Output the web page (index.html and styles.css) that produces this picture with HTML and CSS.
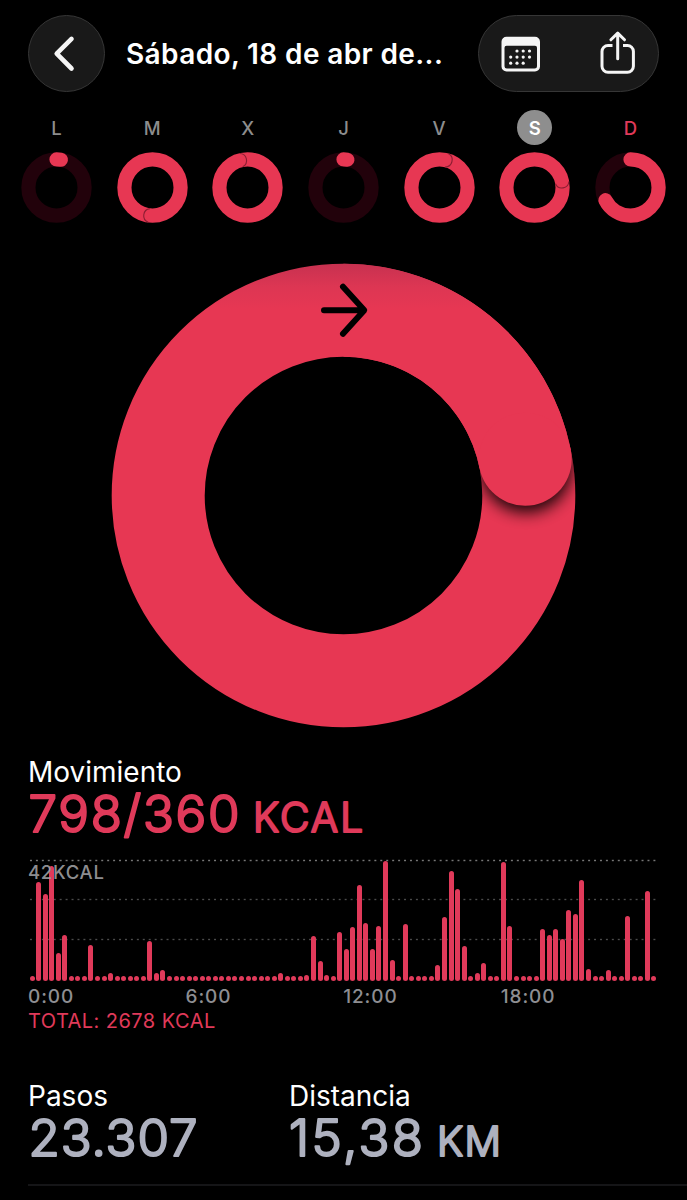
FILE: index.html
```html
<!DOCTYPE html>
<html lang="es">
<head>
<meta charset="utf-8">
<title>Movimiento</title>
<link rel="stylesheet" href="styles.css">
</head>
<body>
<main class="screen">
  <header class="topbar">
    <button class="glass back" aria-label="Atrás">
      <svg width="75" height="75" viewBox="0 0 75 75"><path d="M42.500 22.900 27.700 37.700l14.800 14.800" class="line back-line"/></svg>
    </button>
    <h1 class="title">Sábado, 18 de abr de...</h1>
    <div class="glass actions">
      <svg width="179" height="75" viewBox="1.500 .5 179 75">
        <path fill-rule="evenodd" fill="#f5f5f5" d="M29 21.2h28.500a5 5 0 0 1 5 5V51a5 5 0 0 1-5 5H29a5 5 0 0 1-5-5V26.200a5 5 0 0 1 5-5ZM29 30.200a2 2 0 0 0-2 2V50.700a2.300 2.300 0 0 0 2.300 2.300H57.200a2.300 2.300 0 0 0 2.300-2.300V32.200a2 2 0 0 0-2-2Z"/>
        <g fill="#f5f5f5">
          <circle cx="39.500" cy="35.500" r="1.600"/><circle cx="45.700" cy="35.500" r="1.600"/><circle cx="52" cy="35.500" r="1.600"/>
          <circle cx="33.200" cy="41.600" r="1.600"/><circle cx="39.500" cy="41.600" r="1.600"/><circle cx="45.700" cy="41.600" r="1.600"/><circle cx="52" cy="41.600" r="1.600"/>
          <circle cx="33.200" cy="47.700" r="1.600"/><circle cx="39.500" cy="47.700" r="1.600"/><circle cx="45.700" cy="47.700" r="1.600"/>
        </g>
        <path class="line share-line" d="M135 30H130.500a6 6 0 0 0-6 6V50.800a6 6 0 0 0 6 6h19.400a6 6 0 0 0 6-6V36a6 6 0 0 0-6-6H145.500"/>
        <path class="line share-line" d="M140.200 43.200V18M133.400 24.300 140.200 17.600l6.800 6.700"/>
      </svg>
    </div>
  </header>

  <nav class="week" id="week"></nav>

  <svg class="ring" width="465" height="464" viewBox="-232.500 -231.500 465 464">
    <defs>
      <linearGradient id="fade" gradientUnits="userSpaceOnUse" x1="0" y1="-232" x2="0" y2="-185">
        <stop offset="0" stop-color="#c73150"/><stop offset=".5" stop-color="#dd3653"/><stop offset="1" stop-color="#e73753"/>
      </linearGradient>
      <clipPath id="band"><path clip-rule="evenodd" d="M0-231.800a231.800 231.800 0 1 1 0 463.600a231.800 231.800 0 1 1 0-463.600ZM0-138.800a138.800 138.800 0 1 0 0 277.600a138.800 138.800 0 1 0 0-277.600Z"/></clipPath>
      <filter id="soft" x="-50%" y="-50%" width="200%" height="200%"><feGaussianBlur stdDeviation="8"/></filter>
    </defs>
    <circle r="185.300" fill="none" stroke="url(#fade)" stroke-width="93"/>
    <g clip-path="url(#band)">
      <circle cx="182.500" cy="-29" r="46" filter="url(#soft)" opacity=".9"/>
    </g>
    <path d="M0-185.300A185.300 185.300 0 0 1 181.700-36.300" fill="none" stroke="url(#fade)" stroke-width="93"/>
    <circle cx="181.700" cy="-36.300" r="46.500" fill="#e73753"/>
    <path d="M-19.500-185.300H20.500M-.5-208.800 20.800-185.300-.5-161.800" class="arrow"/>
  </svg>

  <section class="move">
    <h2 class="label">Movimiento</h2>
    <svg class="value red" width="400" height="50"><text x=".5" y="42.800" font-size="51" textLength="211">798/360</text><text x="225" y="42.800" font-size="40.500" textLength="110">KCAL</text></svg>
    <div class="chart">
      <div class="bars" id="bars"></div>
      <span class="peak">42KCAL</span>
    </div>
    <div class="hours"><span>0:00</span><span>6:00</span><span>12:00</span><span>18:00</span></div>
    <p class="total">TOTAL: 2678 KCAL</p>
  </section>

  <section class="stats">
    <div>
      <h2 class="label">Pasos</h2>
      <svg class="value gray" width="220" height="50"><text x=".5" y="42.800" font-size="51" textLength="169">23.307</text></svg>
    </div>
    <div>
      <h2 class="label">Distancia</h2>
      <svg class="value gray" width="260" height="50"><text x="0" y="42.800" font-size="51" textLength="134">15,38</text><text x="148" y="42.800" font-size="40.500" textLength="64">KM</text></svg>
    </div>
  </section>
</main>
<script src="app.js"></script>
</body>
</html>
```
FILE: styles.css
```css
* { box-sizing: border-box; }
body { margin: 0; background: #000; color: #fff; font-family: Inter, "Liberation Sans", sans-serif; }
h1, h2, p { margin: 0; font-weight: 400; }
svg { display: block; }
.screen { width: 687px; height: 1200px; overflow: hidden; display: flex; flex-direction: column; }
.topbar { display: flex; align-items: center; height: 92px; padding: 14px 28px 0; flex: none; }
.glass { height: 77px; padding: 0; border: 1px solid #363636; background: #191919; border-radius: 39px; overflow: hidden; flex: none; }
.back { width: 77px; }
.actions { width: 181px; margin-left: auto; }
.line { fill: none; stroke: #f5f5f5; stroke-linejoin: round; }
.back-line { stroke-width: 4.600; stroke-linecap: round; }
.share-line { stroke-width: 3; }
.share-line:last-child { stroke-linecap: round; }
.title { margin-left: 21px; padding-top: 2px; font-size: 28px; font-weight: 600; letter-spacing: 0.380px; white-space: nowrap; }

.week { display: flex; justify-content: space-between; padding: 18px 21px 0; height: 135px; flex: none; }
.day { width: 71px; display: flex; flex-direction: column; align-items: center; gap: 7px; }
.letter { width: 35px; height: 35px; border-radius: 50%; display: grid; place-items: center; font-size: 18.500px; font-weight: 500; color: #8d8d8d; }
.selected .letter { background: #8e8e8e; color: #fff; font-weight: 600; }
.sunday .letter { color: #e03a5a; }
.track { fill: none; stroke: #22020b; stroke-width: 14.2; }
.arc { fill: none; stroke: #e73753; stroke-width: 14.2; stroke-linecap: round; }
.tip { fill: none; stroke: #8b1e32; stroke-width: 1.1; }

.ring { margin: 37px 0 0 111px; flex: none; overflow: visible; }
.arrow { fill: none; stroke: #000; stroke-width: 6; stroke-linecap: round; stroke-linejoin: round; }

.move { padding: 27px 28px 0; height: 324px; flex: none; }
.label { font-size: 28px; line-height: 34px; letter-spacing: 0; }
.value { overflow: visible; font-weight: 300; }
.value text { stroke-width: 2.200; stroke-linejoin: round; }
.red { fill: #e03a5a; stroke: #e03a5a; }
.gray { fill: #aeb1bf; stroke: #aeb1bf; }
.chart { position: relative; height: 122px; margin-top: 20px;
  background:
    radial-gradient(circle, #777 0.8px, transparent 1.200px) 0 0 / 5.950px 3px repeat-x,
    radial-gradient(circle, #4c4c4c 0.7px, transparent 1.200px) 0 39px / 5.950px 3px repeat-x,
    radial-gradient(circle, #4c4c4c 0.7px, transparent 1.200px) 0 79px / 5.950px 3px repeat-x; }
.bars { display: flex; align-items: flex-end; justify-content: space-between; height: 122px; padding-left: 1.500px; width: 629.500px; }
.bar { width: 5px; border-radius: 2.500px; background: #e03a5a; flex: none; }
.peak { position: absolute; left: 0; top: 1px; font-size: 18.500px; line-height: 24px; font-weight: 500; letter-spacing: 0.700px; color: rgba(160, 160, 164, .9); }
.hours { display: grid; grid-template-columns: repeat(4, 157.600px); margin-top: 4px; font-size: 19px; line-height: 24px; font-weight: 500; letter-spacing: 0.900px; color: #8e8e92; }
.total { font-size: 20px; line-height: 24px; letter-spacing: 0.450px; color: #e03a5a; }
.stats { display: grid; grid-template-columns: 261px 1fr; margin-left: 28px; padding-top: 27px; height: 134px; border-bottom: 2px solid #151517; flex: none; }
```
FILE: app.js
```js
// Weekly rings: letter, progress in degrees, whether a full lap is complete
const days = [
  ["L", 9, false], ["M", 187, true], ["X", 347, true], ["J", 8, false],
  ["V", 15, true], ["S", 80, true, "selected"], ["D", 243, false, "sunday"]
];
document.getElementById("week").innerHTML = days.map(([letter, deg, lap, cls = ""]) => {
  const ring = lap
    ? `<circle cx="35.500" cy="35.500" r="28.100" class="arc"/><path class="tip" transform="rotate(${deg} 35.500 35.500)" d="M35.500 .6a7 7 0 0 1 0 13.600"/>`
    : `<circle cx="35.500" cy="35.500" r="28.100" class="track"/><circle cx="35.500" cy="35.500" r="28.100" class="arc" pathLength="360" stroke-dasharray="${deg} 360" transform="rotate(-90 35.500 35.500)"/>`;
  return `<div class="day ${cls}"><span class="letter">${letter}</span><svg width="71" height="71">${ring}</svg></div>`;
}).join("");

// Energy per quarter hour, as bar heights; slots not listed are idle
const energy = {
  1: 99.3, 2: 86.7, 3: 115.3, 4: 28.3, 5: 46.3, 9: 35.7, 12: 7.7, 17: 5.5, 18: 40.3, 19: 8, 20: 11.3,
  38: 8.3, 42: 6.3, 43: 44.7, 44: 19.7, 45: 6.3, 47: 49, 48: 32.3, 49: 54.3, 50: 95.7, 51: 57.7,
  52: 31.7, 53: 54.7, 54: 120.3, 55: 21.3, 57: 56.7, 62: 16, 63: 64.3, 64: 109.7, 65: 91.7, 66: 35,
  68: 8, 69: 18, 72: 118.7, 73: 55.3, 78: 51.7, 79: 45.7, 80: 52.3, 81: 41.7, 82: 70.7, 83: 67.3,
  84: 100.7, 85: 12.3, 88: 11.3, 91: 65, 94: 90
};
document.getElementById("bars").innerHTML = Array.from({ length: 96 }, (_, i) =>
  `<span class="bar" style="height:${energy[i] || 4.6}px"></span>`).join("");
```
